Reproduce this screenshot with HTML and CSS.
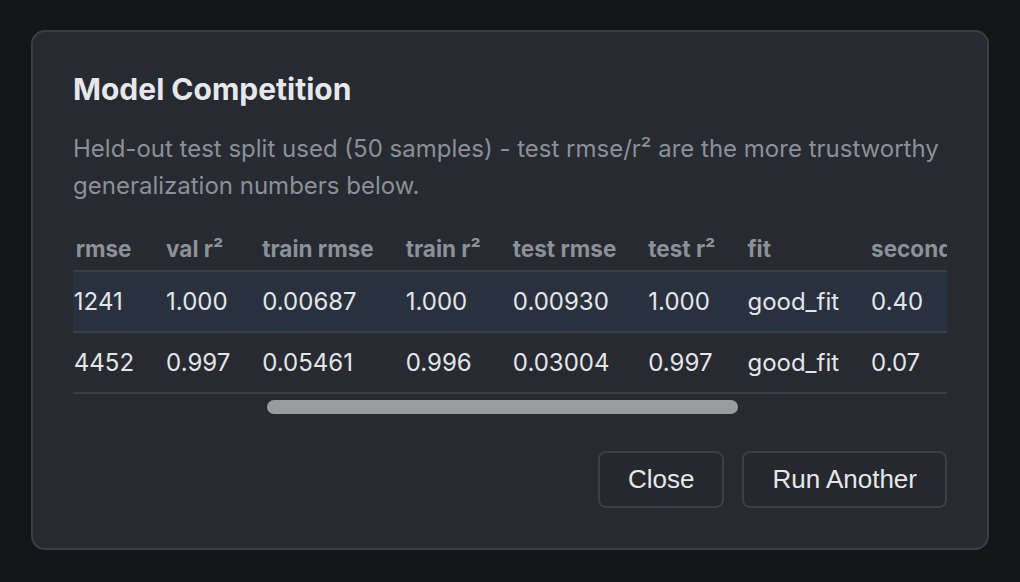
FILE: index.html
```html
<!DOCTYPE html>
<html lang="en">
<head>
  <meta charset="UTF-8" />
  <title>Model Competition</title>
  <link rel="stylesheet" href="styles.css">
</head>
<body>
  <div class="modal">
    <h2 class="modal-title">Model Competition</h2>
    <p class="modal-note">Held-out test split used (50 samples) - test rmse/r² are the more trustworthy generalization numbers below.</p>

    <div class="table-scroll" id="results">
      <table class="results">
        <thead>
          <tr>
            <th>#</th>
            <th>model</th>
            <th>val rmse</th>
            <th>val r²</th>
            <th>train rmse</th>
            <th>train r²</th>
            <th>test rmse</th>
            <th>test r²</th>
            <th>fit</th>
            <th>seconds</th>
            <th>params</th>
          </tr>
        </thead>
        <tbody>
          <tr class="best">
            <td>1</td>
            <td>gradient_boosting</td>
            <td>0.01241</td>
            <td>1.000</td>
            <td>0.00687</td>
            <td>1.000</td>
            <td>0.00930</td>
            <td>1.000</td>
            <td>good_fit</td>
            <td>0.40</td>
            <td>n_estimators=200, depth=3</td>
          </tr>
          <tr>
            <td>2</td>
            <td>random_forest</td>
            <td>0.04452</td>
            <td>0.997</td>
            <td>0.05461</td>
            <td>0.996</td>
            <td>0.03004</td>
            <td>0.997</td>
            <td>good_fit</td>
            <td>0.07</td>
            <td>n_estimators=100, depth=8</td>
          </tr>
        </tbody>
      </table>
    </div>
    <div class="scroll-track">
      <div class="scroll-thumb" id="thumb"></div>
    </div>

    <div class="modal-actions">
      <button class="btn">Close</button>
      <button class="btn">Run Another</button>
    </div>
  </div>

  <script>
    // scroll so the "val r²" column sits near the left edge, like the user left it
    const wrap = document.getElementById("results");
    const valR2 = wrap.querySelector("th:nth-child(4)");
    wrap.scrollLeft = valR2.offsetLeft + 16 - 93;

    // the browser hides native scrollbars here, so draw the thumb ourselves
    const thumb = document.getElementById("thumb");
    const track = wrap.clientWidth;
    const ratio = wrap.clientWidth / wrap.scrollWidth;
    const thumbW = Math.round(track * ratio);
    const maxScroll = wrap.scrollWidth - wrap.clientWidth;
    thumb.style.width = thumbW + "px";
    thumb.style.marginLeft = Math.round((track - thumbW) * wrap.scrollLeft / maxScroll) + "px";
  </script>
</body>
</html>
```

FILE: styles.css
```css
html, body {
  margin: 0;
  height: 100%;
}

body {
  background: #141519;
  font-family: Inter, "Noto Sans", sans-serif;
  padding: 30px 31px;
  box-sizing: border-box;
}

.modal {
  background: #272a30;
  border: 2px solid #3a3d44;
  border-radius: 14px;
  padding: 40px 40px 40px 40px;
  height: 520px;
  box-sizing: border-box;
  display: flex;
  flex-direction: column;
}

.modal-title {
  margin: 0;
  font-size: 30px;
  line-height: 34px;
  font-weight: 700;
  color: #e6e8eb;
}

.modal-note {
  margin: 24px 0 0;
  font-size: 24px;
  line-height: 37px;
  color: #8b9098;
}

.table-scroll {
  margin-top: 24px;
  overflow: hidden;
}

.results {
  border-collapse: collapse;
  white-space: nowrap;
}

.results th {
  text-align: left;
  font-size: 22.5px;
  font-weight: 700;
  color: #8c9199;
  padding: 8px 16px;
  line-height: 26px;
  border-bottom: 2px solid #3a3e45;
}

.results td {
  font-size: 24px;
  color: #e3e5e8;
  padding: 17px 16px;
  line-height: 25px;
  border-bottom: 2px solid #3a3e45;
}

.results th:first-child,
.results td:first-child {
  padding-left: 42px;
}

.results th:last-child,
.results td:last-child {
  padding-right: 24px;
}

.results tr.best td {
  background: #2a313e;
}

.scroll-track {
  margin-top: 6px;
  height: 14px;
  display: flex;
}

.scroll-thumb {
  height: 14px;
  background: #9a9b9e;
  border-radius: 7px;
}

.modal-actions {
  margin-top: auto;
  display: flex;
  justify-content: flex-end;
  gap: 18px;
}

.btn {
  font-family: "Liberation Sans", Arial, sans-serif;
  font-size: 26px;
  color: #e6e7e9;
  background: #25282d;
  border: 2px solid #3c3f46;
  border-radius: 8px;
  padding: 0 28px;
  height: 57px;
  cursor: pointer;
}
```
